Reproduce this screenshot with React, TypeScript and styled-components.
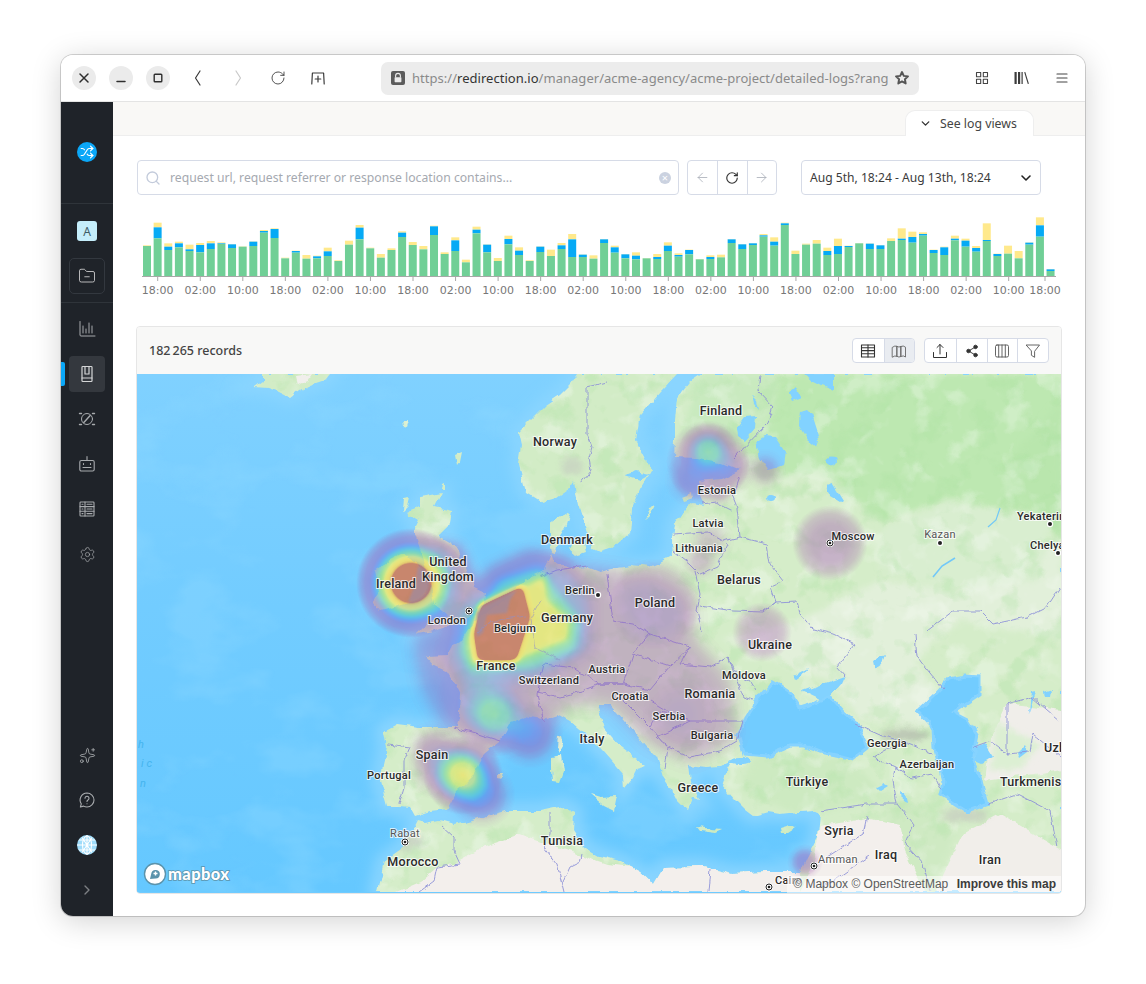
import React from 'react';
import styled, { createGlobalStyle } from 'styled-components';
import {
  ArrowLeft,
  ArrowRight,
  ChevronDown,
  ChevronRight,
  FolderMinus,
  RotateCw,
  Search,
  Settings,
  Share2,
  Shuffle,
  Sparkles,
} from 'lucide-react';

const GlobalStyle = createGlobalStyle`
  html, body {
    margin: 0;
    padding: 0;
    background: #fff;
    font-family: "Noto Sans", "Liberation Sans", sans-serif;
  }
`;

const Page = styled.div`
  width: 1146px;
  height: 984px;
  padding: 55px 0 0 61px;
  box-sizing: border-box;
  overflow: hidden;
`;

const Window = styled.div`
  width: 1024px;
  height: 861px;
  border-radius: 12px;
  overflow: hidden;
  display: flex;
  flex-direction: column;
  background: #fff;
  box-shadow: 0 0 0 1px rgba(0, 0, 0, 0.16), 0 5px 30px rgba(0, 0, 0, 0.18);
`;

const TitleBar = styled.div`
  height: 46px;
  flex: none;
  display: flex;
  align-items: center;
  padding-left: 11px;
  background: #fff;
  border-bottom: 1px solid #e4e4e4;
  color: #333;
`;

const WinButton = styled.button`
  width: 24px;
  height: 24px;
  padding: 0;
  margin-right: 13px;
  border: 0;
  border-radius: 50%;
  background: #ebebeb;
  display: flex;
  align-items: center;
  justify-content: center;
  color: #2e2e2e;
`;

const NavIcon = styled.div<{ $faded?: boolean }>`
  width: 40px;
  height: 24px;
  display: flex;
  align-items: center;
  justify-content: center;
  color: ${({ $faded }) => ($faded ? '#c9c9c9' : '#3a3a3a')};
`;

const NavGroup = styled.div`
  display: flex;
  margin-left: -5px;
`;

const UrlBar = styled.div`
  width: 538px;
  height: 33px;
  margin-left: 43px;
  border-radius: 7px;
  background: #ececec;
  display: flex;
  align-items: center;
  padding: 0 9px 0 10px;
  box-sizing: border-box;
  color: #3d3d3d;
`;

const UrlText = styled.div`
  flex: 1;
  min-width: 0;
  margin: 0 6px 0 7px;
  overflow: hidden;
  white-space: nowrap;
  font-size: 13px;
  letter-spacing: 0.03px;
  color: #8a8a8a;

  b {
    font-weight: 400;
    color: #333;
  }
`;

const ToolIcons = styled.div`
  display: flex;
  margin-left: 53px;
  gap: 20px;
  color: #444;
`;

const ToolIcon = styled.div`
  width: 20px;
  height: 20px;
  display: flex;
  align-items: center;
  justify-content: center;
`;

const Body = styled.div`
  flex: 1;
  min-height: 0;
  display: flex;
`;

const Sidebar = styled.nav`
  width: 52px;
  flex: none;
  background: #1f2329;
  display: flex;
  flex-direction: column;
  color: #a8abae;
`;

const LogoBlock = styled.div`
  height: 102px;
  flex: none;
  box-sizing: border-box;
  padding-top: 40px;
  display: flex;
  justify-content: center;
  border-bottom: 1px solid #2f343a;
`;

const LogoDot = styled.div`
  width: 20px;
  height: 20px;
  border-radius: 50%;
  background: #0ba7f7;
  color: #fff;
  display: flex;
  align-items: center;
  justify-content: center;
`;

const OrgBlock = styled.div`
  height: 99px;
  flex: none;
  box-sizing: border-box;
  padding-top: 17px;
  display: flex;
  flex-direction: column;
  align-items: center;
  gap: 17px;
  border-bottom: 1px solid #2f343a;
`;

const OrgBadge = styled.div`
  width: 20px;
  height: 20px;
  border-radius: 3px;
  background: #c5eefb;
  color: #3f5d66;
  font-size: 12px;
  display: flex;
  align-items: center;
  justify-content: center;
`;

const FolderButton = styled.div`
  width: 36px;
  height: 36px;
  border: 1px solid #33383f;
  border-radius: 5px;
  box-sizing: border-box;
  display: flex;
  align-items: center;
  justify-content: center;
  color: #c9cacb;
`;

const SideList = styled.div<{ $bottom?: boolean }>`
  display: flex;
  flex-direction: column;
  align-items: center;
  gap: 9px;
  padding-top: ${({ $bottom }) => ($bottom ? '0' : '8px')};
  padding-bottom: ${({ $bottom }) => ($bottom ? '8px' : '0')};
  margin-top: ${({ $bottom }) => ($bottom ? 'auto' : '0')};
`;

const SideItem = styled.div<{ $active?: boolean }>`
  position: relative;
  width: 36px;
  height: 36px;
  border-radius: 4px;
  display: flex;
  align-items: center;
  justify-content: center;
  background: ${({ $active }) => ($active ? '#34383e' : 'transparent')};
  color: ${({ $active }) => ($active ? '#d5d6d7' : 'inherit')};

  ${({ $active }) =>
    $active
      ? `&::before {
    content: '';
    position: absolute;
    left: -8px;
    top: 6px;
    width: 4px;
    height: 24px;
    border-radius: 0 2px 2px 0;
    background: #0ba7f7;
  }`
      : ''}
`;

const Avatar = styled.div`
  width: 20px;
  height: 20px;
  border-radius: 50%;
  overflow: hidden;
  display: flex;
`;

const Main = styled.main`
  flex: 1;
  min-width: 0;
  display: flex;
  flex-direction: column;
`;

const TabStrip = styled.div`
  height: 33px;
  flex: none;
  background: #f9f8f6;
  border-bottom: 1px solid #eeeeee;
  display: flex;
  justify-content: flex-end;
  align-items: flex-end;
  padding-right: 51px;
`;

const ViewsTab = styled.div`
  width: 129px;
  height: 26px;
  margin-bottom: -1px;
  box-sizing: border-box;
  background: #fff;
  border: 1px solid #eeeeee;
  border-bottom: 0;
  border-radius: 10px 10px 0 0;
  display: flex;
  align-items: center;
  padding-left: 13px;
  gap: 8px;
  font-size: 12.3px;
  color: #444;
`;

const Content = styled.div`
  flex: 1;
  min-height: 0;
  padding: 24px 23px 0 24px;
  display: flex;
  flex-direction: column;
`;

const FilterRow = styled.div`
  display: flex;
  align-items: stretch;
  height: 35px;
`;

const SearchBox = styled.div`
  width: 542px;
  box-sizing: border-box;
  border: 1px solid #d6dbe7;
  border-radius: 4px;
  display: flex;
  align-items: center;
  padding: 0 7px;
  color: #c3cbdb;
`;

const SearchText = styled.div`
  flex: 1;
  margin-left: 9px;
  font-size: 12.2px;
  color: #a5a9b0;
`;

const ClearDot = styled.div`
  width: 12px;
  height: 12px;
  border-radius: 50%;
  background: #cbd2e0;
  color: #fff;
  font-size: 11px;
  line-height: 12px;
  text-align: center;
`;

const Group = styled.div<{ $gap?: number }>`
  display: flex;
  margin-left: ${({ $gap }) => $gap ?? 8}px;
  border: 1px solid #d6dbe7;
  border-radius: 4px;
  overflow: hidden;
  background: #fff;
`;

const GroupButton = styled.div<{ $dim?: boolean; $on?: boolean; $w?: number }>`
  width: ${({ $w }) => $w ?? 29.33}px;
  box-sizing: border-box;
  display: flex;
  align-items: center;
  justify-content: center;
  color: ${({ $dim }) => ($dim ? '#a9aeb8' : '#333')};
  background: ${({ $on }) => ($on ? '#e9ecf1' : 'transparent')};

  & + & {
    border-left: 1px solid #d6dbe7;
  }
`;

const DateSelect = styled.div`
  width: 240px;
  margin-left: 24px;
  box-sizing: border-box;
  border: 1px solid #d6dbe7;
  border-radius: 4px;
  display: flex;
  align-items: center;
  justify-content: space-between;
  padding: 0 6px 0 8px;
  font-size: 12.1px;
  color: #3b3b3b;
`;

const ChartWrap = styled.div`
  margin: 20px 0;
  height: 91px;
  flex: none;

  svg {
    display: block;
  }
`;

const Panel = styled.section`
  width: 926px;
  height: 568px;
  margin-left: -1px;
  box-sizing: border-box;
  border: 1px solid #e6e6e6;
  border-radius: 4px;
  display: flex;
  flex-direction: column;
  overflow: hidden;
`;

const PanelHead = styled.div`
  height: 47px;
  flex: none;
  background: #f8f8f7;
  display: flex;
  align-items: center;
  padding: 0 12px 0 12px;
`;

const Records = styled.div`
  flex: 1;
  font-size: 12.5px;
  font-weight: 500;
  color: #444;
`;

const HeadGroup = styled(Group)`
  height: 25px;
  box-sizing: border-box;
`;

const MapFrame = styled.div`
  position: relative;
  flex: 1;
  min-height: 0;
  overflow: hidden;
  background: #6fcbff;

  svg {
    display: block;
  }
`;

const Attribution = styled.div`
  position: absolute;
  right: 0;
  bottom: 0;
  padding: 0 5px 1px 6px;
  height: 17px;
  box-sizing: border-box;
  background: rgba(255, 255, 255, 0.55);
  font-family: "Liberation Sans", Arial, sans-serif;
  font-size: 12px;
  line-height: 16px;
  white-space: nowrap;
  color: #5c5c5c;

  b {
    margin-left: 5px;
    color: #3c3c3c;
  }
`;

const MapLogo = styled.div`
  position: absolute;
  left: 6px;
  bottom: 7px;
  display: flex;
  align-items: center;
  gap: 1px;
`;

const MapLogoText = styled.span`
  font-family: "Lato", "Liberation Sans", sans-serif;
  font-size: 16.5px;
  font-weight: 900;
  letter-spacing: 0.4px;
  color: #fff;
  -webkit-text-stroke: 1.6px #5b93ab;
  paint-order: stroke fill;
`;

const Place = styled.text<{ $size?: number; $muted?: boolean }>`
  font-family: Roboto, "Noto Sans", sans-serif;
  font-size: ${({ $size }) => $size ?? 12.5}px;
  font-weight: ${({ $muted }) => ($muted ? 400 : 500)};
  letter-spacing: 0.25px;
  fill: ${({ $muted }) => ($muted ? '#555' : '#2a2a2a')};
  stroke: rgba(255, 255, 255, 0.75);
  stroke-width: 2px;
  paint-order: stroke fill;
`;

const OceanText = styled.text`
  font-family: Roboto, sans-serif;
  font-size: 11px;
  font-style: italic;
  fill: #45b4ee;
`;

const TickLabel = styled.text`
  font-family: "DejaVu Sans", sans-serif;
  font-size: 11px;
  fill: #777;
`;

// bar tops read off the picture: [green, blue, yellow], measured in 3x crop px, 198 = baseline
const bars: number[][] = [
  [108, 108, 106], [85, 52, 38], [120, 110, 100], [112, 100, 95], [123, 118, 104], [127, 105, 99],
  [117, 100, 93], [102, 100, 97], [114, 103, 102], [110, 110, 109], [108, 95, 94], [68, 63, 60],
  [84, 57, 55], [145, 145, 143], [128, 123, 122], [146, 146, 135], [145, 139, 137], [138, 124, 113],
  [153, 153, 151], [104, 104, 92], [88, 53, 45], [115, 115, 113], [143, 143, 132], [120, 120, 115],
  [81, 68, 64], [105, 105, 96], [118, 118, 108], [75, 49, 47], [132, 132, 127], [123, 91, 82],
  [157, 157, 149], [70, 59, 50], [127, 104, 103], [153, 153, 144], [103, 87, 77], [135, 122, 112],
  [153, 153, 151], [126, 110, 109], [138, 138, 119], [117, 106, 99], [141, 88, 72], [141, 134, 133],
  [146, 146, 136], [99, 88, 87], [128, 112, 107], [145, 133, 132], [148, 137, 127], [145, 145, 144],
  [147, 141, 132], [123, 107, 97], [140, 135, 130], [133, 120, 119], [148, 148, 147], [147, 141, 136],
  [142, 142, 134], [99, 88, 87], [117, 103, 102], [105, 100, 99], [80, 76, 72], [107, 95, 82],
  [45, 40, 38], [132, 132, 122], [104, 104, 101], [101, 101, 90], [135, 123, 113], [132, 108, 86],
  [111, 108, 107], [100, 100, 99], [117, 101, 100], [117, 106, 105], [93, 93, 85], [90, 86, 55],
  [98, 81, 65], [77, 72, 67], [129, 120, 119], [135, 112, 110], [91, 86, 77], [110, 92, 86],
  [125, 114, 108], [93, 90, 40], [138, 132, 131], [131, 131, 107], [145, 145, 123], [104, 98, 97],
  [80, 46, 22], [183, 178, 177],
];

const ticks = ['18:00', '02:00', '10:00', '18:00', '02:00', '10:00', '18:00', '02:00', '10:00', '18:00', '02:00', '10:00', '18:00', '02:00', '10:00', '18:00', '02:00', '10:00', '18:00', '02:00', '10:00', '18:00'];

const Chart = () => (
  <svg width="925" height="91" viewBox="137 215 925 91">
    {bars.map(([g, b, y], i) => {
      const x = 143 + i * 10.63;
      const top = (v: number) => 210 + v / 3;
      return (
        <g key={i}>
          <rect x={x} y={top(y)} width="8" height={(b - y) / 3} fill="#ffe98c" />
          <rect x={x} y={top(b)} width="8" height={(g - b) / 3} fill="#06aaf5" />
          <rect x={x} y={top(g)} width="8" height={276 - top(g)} fill="#70cf96" />
        </g>
      );
    })}
    <line x1="142" x2="1056" y1="276.5" y2="276.5" stroke="#a8a8a8" />
    {ticks.map((t, i) => {
      const x = i === ticks.length - 1 ? 1045 : 157.7 + i * 42.55;
      return (
        <g key={i}>
          <line x1={x} x2={x} y1="276" y2="281" stroke="#a8a8a8" />
          <TickLabel x={x} y="294" textAnchor="middle">{t}</TickLabel>
        </g>
      );
    })}
  </svg>
);

const landPath =
  'M702 374 L690 382 L683 391 L677 400 L675 420 L675 441 L674 457 L697 458 L720 462 L740 470 L722 479 L697 481 L700 495 L704 505 L693 503 L684 510 L674 525 L672 540 L673 556 L660 563 L650 567 L630 565 L612 568 L600 571 L587 566 L570 568 L556 564 L552 554 L545 570 L527 578 L516 588 L504 600 L488 612 L472 624 L462 640 L452 644 L448 656 L427 657 L434 665 L447 671 L455 684 L460 694 L459 712 L456 727 L420 727 L397 724 L384 731 L387 747 L383 765 L380 781 L387 806 L400 806 L410 807 L415 816 L430 811 L447 809 L457 791 L474 774 L484 754 L500 741 L510 722 L525 716 L542 719 L557 714 L570 721 L585 734 L597 744 L611 760 L623 774 L624 788 L632 778 L636 770 L647 767 L632 755 L618 744 L604 728 L597 704 L610 704 L630 727 L645 745 L657 757 L663 777 L672 790 L677 800 L688 811 L692 797 L700 800 L690 782 L688 766 L705 768 L720 767 L733 760 L727 770 L722 785 L735 800 L745 810 L753 816 L768 812 L780 814 L798 812 L813 811 L820 814 L818 837 L807 857 L800 872 L767 872 L733 874 L700 866 L663 867 L653 884 L640 872 L620 861 L600 856 L584 847 L574 831 L575 812 L564 806 L540 811 L505 811 L480 818 L455 824 L440 820 L425 823 L417 821 L404 847 L384 861 L377 892 L1062 892 L1062 374 Z';

const isles = [
  'M254 387 L262 381 L262 374 L330 374 L325 380 L310 385 L298 391 L290 397 L280 392 L268 388 Z',
  'M420 497 L441 493 L434 507 L452 511 L449 527 L439 537 L455 546 L465 567 L474 587 L485 592 L484 604 L470 614 L457 624 L434 631 L417 634 L430 621 L447 614 L434 604 L430 580 L424 561 L417 541 L414 531 L419 521 L407 512 L420 507 Z',
  'M404 554 L414 561 L424 571 L427 587 L417 601 L394 607 L380 611 L372 602 L380 591 L375 571 L390 561 Z',
  'M577 374 L600 374 L677 374 L660 392 L640 415 L636 440 L652 470 L640 490 L632 510 L630 533 L612 548 L600 552 L592 548 L585 525 L578 505 L574 482 L570 488 L556 498 L542 502 L526 492 L519 465 L522 445 L519 431 L532 418 L545 405 L560 395 L570 385 Z',
  'M570 511 L566 525 L558 538 L556 552 L552 554 L550 540 L550 524 L560 518 Z',
  'M572 542 L584 544 L586 552 L575 556 L568 550 Z',
  'M404 497 L410 496 L408 505 L403 510 Z',
  'M455 455 L462 452 L460 462 L457 466 Z',
  'M402 421 L409 420 L407 427 L403 426 Z',
  'M442 484 L444 483 L444 490 L441 490 Z',
  'M557 737 L561 736 L563 745 L559 752 L556 746 Z',
  'M551 757 L562 755 L564 772 L560 783 L552 782 L551 770 Z',
  'M497 774 L503 774 L501 778 L497 777 Z',
  'M590 794 L600 797 L617 796 L614 811 L604 806 Z',
  'M697 826 L710 828 L722 829 L715 832 L700 830 Z',
  'M780 829 L790 826 L797 828 L788 834 L781 834 Z',
  'M646 519 L650 507 L655 505 L650 515 Z',
  'M682 497 L692 493 L693 499 L684 502 Z',
];

const waters = [
  'M757 441 L765 436 L775 437 L785 452 L783 465 L775 468 L768 470 L760 458 Z',
  'M800 411 L806 409 L812 415 L820 440 L818 448 L808 440 L799 425 Z',
  'M805 374 L833 374 L833 389 L822 385 L812 380 Z',
  'M827 486 L833 484 L843 500 L840 502 L830 496 Z',
  'M625 475 L637 471 L650 474 L640 480 Z',
  'M737 428 L745 417 L757 416 L756 428 L745 441 L738 436 Z',
  'M752 395 L757 400 L759 409 L754 403 Z',
  'M789 395 L797 388 L802 398 L792 402 Z',
  'M826 462 A5 4 0 1 1 837 462 A5 4 0 1 1 826 462 Z',
  'M767 498 A4 3 0 1 1 775 498 A4 3 0 1 1 767 498 Z',
  'M803 691 L845 676 L842 683 L830 697 L820 699 Z',
  'M973 747 L984 743 L993 757 L982 763 L975 760 Z',
  'M729 761 A11 4 0 1 1 751 761 A11 4 0 1 1 729 761 Z',
  'M877 788 L885 784 L888 786 L880 791 Z',
  'M902 790 L906 792 L908 804 L903 802 Z',
  'M1017 752 L1024 745 L1027 752 L1019 758 Z',
  'M1030 692 L1034 691 L1031 703 L1028 712 Z',
  'M1043 692 L1052 689 L1051 695 L1044 697 Z',
  'M873 661 L885 654 L882 665 L875 670 Z',
  'M793 676 L808 668 L802 676 L795 681 Z',
];

const innerSeas = [
  'M737 734 L745 720 L757 701 L773 682 L780 686 L792 694 L792 697 L800 709 L810 706 L820 700 L830 697 L845 714 L857 724 L868 747 L853 759 L835 755 L820 752 L805 746 L790 746 L767 756 L743 754 Z',
  'M980 677 L965 676 L950 679 L935 695 L918 711 L933 727 L934 750 L943 781 L940 794 L967 811 L987 804 L983 790 L980 777 L973 757 L977 734 L968 720 L953 712 L968 702 L980 694 Z',
];

const borders = [
  '607,382 587,387 587,434 592,447 589,457 591,470 580,484',
  '760,374 758,391 773,407 767,424 733,459',
  '740,477 733,497 737,507 740,537 767,544 770,564 783,581 770,587 775,602 763,611',
  '703,504 715,502 733,511',
  '673,534 707,532 723,541 740,537',
  '727,544 717,567 700,574 690,564 673,551',
  '695,571 700,594 697,611 702,631',
  '700,606 733,611 763,612 775,602 797,601 800,614 813,629 833,634 855,644 837,667 845,676',
  '607,574 613,621 633,624 650,634 690,647',
  '544,664 537,694 544,721',
  '540,577 557,570 587,566',
  '454,727 475,733 500,741',
  '387,744 410,747 404,761 404,787 399,804',
  '544,664 573,668 600,684 623,684 633,654 650,634',
  '537,692 560,697 585,690 600,684',
  '633,654 670,666 690,647 680,664 710,667 728,657 743,697 753,700',
  '728,657 737,675 750,682 755,690',
  '600,684 623,684 650,690 670,666',
  '657,737 690,721 743,721 737,741 720,751 690,757 668,747 657,737',
  '623,700 650,727 668,747 665,770',
  '650,700 675,715 690,721',
  '650,727 660,712 680,716',
  '855,724 880,735 905,742 933,754',
  '873,757 895,767 893,781 897,804 867,804 820,811',
  '873,757 885,750 905,742',
  '895,767 912,778 932,774 942,790',
  '867,816 863,834 827,857',
  '897,804 913,824 905,844 923,864 930,891',
  '915,634 917,657 943,689',
  '927,631 953,611 980,611 993,624 1027,617 1047,607 1060,587',
  '973,747 990,741 1007,754 1007,704 1032,697 1060,721',
  '1007,754 1030,752 1033,734 1060,757',
  '988,804 1017,794 1050,811 1057,847',
  '442,826 454,837 454,851 460,864 437,867 434,881 419,892',
  '550,811 550,834 544,847 557,864 564,892',
  '582,854 580,862 570,867 562,884',
  '710,869 708,892',
  '821,888 840,876 870,855',
];

// x, y, radius, strength
const heat: [number, number, number, number][] = [
  [411, 583, 55, 1],
  [411, 583, 34, 0.45],
  [495, 715, 42, 0.3],
  [475, 700, 40, 0.1],
  [530, 735, 34, 0.18],
  [463, 775, 40, 0.58],
  [482, 795, 34, 0.18],
  [440, 765, 36, 0.12],
  [432, 748, 28, 0.08],
  [680, 715, 40, 0.05],
  [708, 452, 30, 0.32],
  [692, 480, 28, 0.1],
  [730, 468, 28, 0.1],
  [765, 470, 22, 0.08],
  [720, 492, 18, 0.06],
  [710, 540, 26, 0.05],
  [700, 562, 22, 0.06],
  [805, 862, 18, 0.16],
];

// flat low-intensity patches, these only ever reach the mauve part of the ramp
const discs: [number, number, number, number][] = [
  [830, 543, 38, 0.1],
  [762, 632, 30, 0.08],
  [655, 604, 46, 0.07],
  [708, 462, 42, 0.09],
];

// contour bands around the hot zone over Belgium and northern France
const heatBands: [string, number, number][] = [
  ['M415 640 L470 600 L540 565 L600 570 L650 578 L690 600 L692 640 L728 680 L735 738 L690 760 L650 742 L610 702 L570 702 L540 732 L500 745 L470 732 L448 730 L425 690 Z', 0.09, 9],
  ['M432 542 L460 545 L480 590 L470 622 L432 622 Z', 0.1, 6],
  ['M455 620 L490 570 L530 552 L565 560 L590 600 L590 650 L540 680 L470 690 L445 660 Z', 0.15, 7],
  ['M468 625 L500 580 L540 568 L555 590 L580 620 L575 650 L530 668 L470 672 L460 650 Z', 0.22, 5],
  ['M530 583 L545 575 L548 600 L570 620 L568 640 L530 655 L500 668 L472 663 L467 640 L480 605 Z', 0.3, 3],
  ['M522 586 L530 617 L516 660 L478 660 L474 633 L481 605 Z', 1, 3],
];

const labels: [string, number, number, number?, boolean?][] = [
  ['Finland', 721, 415],
  ['Norway', 555, 446],
  ['Estonia', 717, 494, 11],
  ['Latvia', 708, 527, 11],
  ['Lithuania', 699, 552, 11],
  ['Denmark', 567, 544],
  ['Belarus', 739, 584],
  ['Poland', 655, 607],
  ['Germany', 567, 622],
  ['Berlin', 580, 594, 11],
  ['United', 448, 566],
  ['Kingdom', 448, 581],
  ['Ireland', 396, 588],
  ['London', 447, 624, 11],
  ['Belgium', 515, 632, 11],
  ['France', 496, 670],
  ['Moscow', 853, 540, 11],
  ['Kazan', 940, 538, 11, true],
  ['Ukraine', 770, 649],
  ['Moldova', 744, 679, 11],
  ['Austria', 607, 673, 11],
  ['Switzerland', 549, 684, 11],
  ['Croatia', 630, 700, 11],
  ['Romania', 710, 698],
  ['Serbia', 669, 720, 11],
  ['Bulgaria', 712, 739, 11],
  ['Italy', 592, 743],
  ['Spain', 432, 759],
  ['Portugal', 389, 779, 11],
  ['Greece', 698, 792],
  ['Türkiye', 807, 786],
  ['Georgia', 887, 747, 11],
  ['Azerbaijan', 927, 768, 11],
  ['Syria', 839, 835],
  ['Iraq', 886, 859],
  ['Iran', 990, 864],
  ['Amman', 838, 863, 11, true],
  ['Tunisia', 562, 845],
  ['Morocco', 413, 866],
  ['Rabat', 405, 837, 11, true],
];

const edgeLabels: [string, number, number, number?][] = [
  ['Yekaterinburg', 1017, 520, 11],
  ['Chelyabinsk', 1030, 549, 11],
  ['Turkmenistan', 1000, 786],
  ['Uzbekistan', 1044, 752],
  ['Cairo', 775, 884, 11],
];

const dots: [number, number][] = [[598, 595], [940, 543], [1050, 524], [1058, 553]];
const ringDots: [number, number][] = [[469, 611], [830, 543], [405, 842], [814, 866], [769, 887]];

const heatStops = [
  [160, 85, 170, 0], [160, 85, 172, 0.26], [160, 85, 178, 0.42], [145, 90, 190, 0.48], [120, 105, 215, 0.5],
  [90, 125, 225, 0.5], [70, 160, 215, 0.5], [70, 190, 190, 0.5], [90, 205, 150, 0.5], [120, 215, 120, 0.5],
  [170, 225, 100, 0.55], [225, 230, 90, 0.58], [245, 225, 80, 0.62], [248, 218, 75, 0.62], [245, 210, 70, 0.62],
  [238, 180, 65, 0.65], [195, 90, 70, 0.7], [195, 90, 70, 0.7], [195, 90, 70, 0.7], [195, 90, 70, 0.7], [195, 90, 70, 0.7],
];

const channel = (i: number) => heatStops.map((s) => (i === 3 ? s[i] : s[i] / 255).toFixed(3)).join(' ');

const mapBox = { filterUnits: 'userSpaceOnUse', x: 137, y: 374, width: 925, height: 518 } as const;

const EuropeMap = () => (
  <svg width="924" height="518" viewBox="137 374 924 518">
    <defs>
      <linearGradient id="sea" x1="0" y1="0" x2="0" y2="1">
        <stop offset="0" stopColor="#80d1ff" />
        <stop offset="0.45" stopColor="#72ccff" />
        <stop offset="1" stopColor="#65c8ff" />
      </linearGradient>
      <radialGradient id="blob">
        <stop offset="0" stopColor="#fff" stopOpacity="1" />
        <stop offset="0.3" stopColor="#fff" stopOpacity="0.85" />
        <stop offset="0.5" stopColor="#fff" stopOpacity="0.5" />
        <stop offset="0.75" stopColor="#fff" stopOpacity="0.15" />
        <stop offset="1" stopColor="#fff" stopOpacity="0" />
      </radialGradient>
      <radialGradient id="disc">
        <stop offset="0" stopColor="#fff" stopOpacity="1" />
        <stop offset="0.5" stopColor="#fff" stopOpacity="0.9" />
        <stop offset="0.75" stopColor="#fff" stopOpacity="0.55" />
        <stop offset="1" stopColor="#fff" stopOpacity="0" />
      </radialGradient>
      <filter id="shelf" {...mapBox}>
        <feGaussianBlur stdDeviation="7" />
      </filter>
      {[1, 3, 5, 6, 7, 9].map((b) => (
        <filter key={b} id={`blur${b}`} {...mapBox}>
          <feGaussianBlur stdDeviation={b} />
        </filter>
      ))}
      <filter id="rough" {...mapBox} colorInterpolationFilters="sRGB">
        <feTurbulence type="fractalNoise" baseFrequency="0.08" numOctaves="3" seed="4" result="n" />
        <feDisplacementMap in="SourceGraphic" in2="n" scale="7" xChannelSelector="R" yChannelSelector="G" />
      </filter>
      <filter id="wiggle" {...mapBox} colorInterpolationFilters="sRGB">
        <feTurbulence type="fractalNoise" baseFrequency="0.14" numOctaves="2" seed="9" result="n" />
        <feDisplacementMap in="SourceGraphic" in2="n" scale="5" xChannelSelector="R" yChannelSelector="G" />
      </filter>
      <filter id="mottleLight" {...mapBox} colorInterpolationFilters="sRGB">
        <feTurbulence type="fractalNoise" baseFrequency="0.035" numOctaves="3" seed="8" />
        <feColorMatrix type="matrix" values="0 0 0 0 1  0 0 0 0 1  0 0 0 0 1  5 0 0 0 -2.6" />
      </filter>
      <filter id="mottleGreen" {...mapBox} colorInterpolationFilters="sRGB">
        <feTurbulence type="fractalNoise" baseFrequency="0.04" numOctaves="3" seed="21" />
        <feColorMatrix type="matrix" values="0 0 0 0 0.66  0 0 0 0 0.88  0 0 0 0 0.62  5 0 0 0 -2.7" />
      </filter>
      <filter id="mottleSea" {...mapBox} colorInterpolationFilters="sRGB">
        <feTurbulence type="fractalNoise" baseFrequency="0.012 0.02" numOctaves="4" seed="14" />
        <feColorMatrix type="matrix" values="0 0 0 0 0.56  0 0 0 0 0.85  0 0 0 0 1  4 0 0 0 -2" />
      </filter>
      <filter id="heat" {...mapBox} colorInterpolationFilters="sRGB">
        <feColorMatrix type="matrix" values="0 0 0 1 0  0 0 0 1 0  0 0 0 1 0  0 0 0 1 0" />
        <feComponentTransfer>
          <feFuncR type="table" tableValues={channel(0)} />
          <feFuncG type="table" tableValues={channel(1)} />
          <feFuncB type="table" tableValues={channel(2)} />
          <feFuncA type="table" tableValues={channel(3)} />
        </feComponentTransfer>
      </filter>
      <clipPath id="land">
        <path d={landPath} />
        <path d={isles.join(' ')} />
      </clipPath>
    </defs>

    <rect x="137" y="374" width="925" height="518" fill="url(#sea)" />
    <rect x="137" y="374" width="925" height="518" filter="url(#mottleSea)" opacity="0.35" />
    <g filter="url(#shelf)" fill="none" stroke="#8ad5ff" strokeWidth="16">
      <path d={landPath} />
      <path d={isles.slice(0, 4).join(' ')} />
    </g>

    <g filter="url(#rough)">
      <path d={landPath} fill="#d5edc9" />
      <path d={isles.join(' ')} fill="#d2ecc6" />
      <g clipPath="url(#land)">
        <path d="M780 374 L1062 374 L1062 520 L950 500 L880 520 L820 470 L760 480 L740 450 Z" fill="#bde8b1" filter="url(#blur3)" />
        <path d="M700 374 L780 374 L770 430 L720 450 L680 440 Z" fill="#c9eabf" filter="url(#blur3)" />
        <path d="M1062 400 L1000 470 L1062 540 Z" fill="#b9e6ad" filter="url(#blur3)" />
        <path d="M800 620 L880 580 L960 590 L1062 540 L1062 640 L960 620 L915 660 L960 730 L860 720 L830 680 L720 640 Z" fill="#e2f0da" filter="url(#blur3)" />
        <path d="M950 500 L1050 520 L1040 580 L950 590 L880 570 L880 530 Z" fill="#d9eed0" filter="url(#blur3)" />
        <path d="M760 740 L850 760 L890 800 L800 815 L740 790 Z" fill="#cdeac1" filter="url(#blur3)" />
        <path d="M880 790 L960 830 L930 890 L900 870 Z" fill="#cfeac3" filter="url(#blur3)" />
        <rect x="137" y="374" width="925" height="518" filter="url(#mottleLight)" opacity="0.28" />
        <rect x="137" y="374" width="925" height="518" filter="url(#mottleGreen)" opacity="0.3" />
        <path d="M397 892 L420 882 L437 867 L457 862 L484 847 L520 834 L540 841 L577 854 L607 864 L640 868 L700 860 L800 868 L800 892 Z" fill="#f3efec" />
        <path d="M867 817 L820 827 L813 867 L800 892 L925 892 L905 850 L900 825 Z" fill="#f3efec" />
        <path d="M963 834 L1000 814 L1062 850 L1062 892 L935 892 Z" fill="#f1eeea" />
        <path d="M1007 704 L1062 711 L1062 770 L985 781 L990 740 Z" fill="#f0eeea" />
        <path d="M995 720 L1040 745 L1020 770 L990 770 Z" fill="#dcefd3" filter="url(#blur3)" />
        <ellipse cx="572" cy="466" rx="11" ry="9" fill="#c4cabf" opacity="0.6" filter="url(#blur3)" />
        <ellipse cx="400" cy="842" rx="24" ry="8" fill="#bfc5bc" opacity="0.6" filter="url(#blur3)" />
        <ellipse cx="905" cy="735" rx="24" ry="7" fill="#b4b9ae" opacity="0.7" filter="url(#blur3)" />
        <ellipse cx="965" cy="815" rx="24" ry="6" fill="#c4c9be" opacity="0.7" filter="url(#blur3)" />
      </g>
      <path d="M296 376 L312 374 L308 380 L298 384 Z" fill="#f1efec" />
      <path d={waters.join(' ')} fill="#82d2ff" />
      <path d={innerSeas.join(' ')} fill="#72ccff" stroke="#86d3ff" strokeWidth="3" />
    </g>
    <path d="M933 577 L942 566 L955 558" fill="none" stroke="#72c8f8" strokeWidth="1.6" />
    <path d="M988 527 L996 520 L1000 508" fill="none" stroke="#72c8f8" strokeWidth="1.2" />
    <g fill="none" stroke="#8f93d8" strokeWidth="0.9" strokeLinejoin="round" filter="url(#wiggle)">
      {borders.map((p) => (
        <polyline key={p} points={p} />
      ))}
    </g>

    <g filter="url(#heat)">
      {heat.map(([cx, cy, r, a]) => (
        <circle key={`${cx}-${cy}-${r}`} cx={cx} cy={cy} r={r} fill="url(#blob)" fillOpacity={a} />
      ))}
      {discs.map(([cx, cy, r, a]) => (
        <circle key={`${cx}-${cy}-${r}`} cx={cx} cy={cy} r={r} fill="url(#disc)" fillOpacity={a} />
      ))}
      {heatBands.map(([d, a, b]) => (
        <path key={d} d={d} fill="#fff" fillOpacity={a} filter={`url(#blur${b})`} />
      ))}
    </g>
    <g fill="#a58a98" opacity="0.85" filter="url(#blur1)">
      <path d="M418 566 A19 19 0 0 1 408 602 L415 585 Z" />
      <path d="M477 613 L483 607 L517 590 L510 600 L507 613 L487 615 L483 633 L477 637 Z" />
    </g>
    <g fill="none" stroke="#8f8fc8" strokeWidth="0.7" opacity="0.8" filter="url(#wiggle)">
      <polyline points="477,633 490,622 510,618 527,616" />
      <polyline points="540,600 530,620 535,648 560,660" />
    </g>

    {ringDots.map(([x, y]) => (
      <g key={`${x}-${y}`}>
        <circle cx={x} cy={y} r="4" fill="#fff" />
        <circle cx={x} cy={y} r="3" fill="none" stroke="#222" strokeWidth="1" />
        <circle cx={x} cy={y} r="1.3" fill="#222" />
      </g>
    ))}
    {dots.map(([x, y]) => (
      <g key={`${x}-${y}`}>
        <circle cx={x} cy={y} r="3.2" fill="#fff" />
        <circle cx={x} cy={y} r="2" fill="#222" />
      </g>
    ))}
    {labels.map(([t, x, y, s, m]) => (
      <Place key={t} x={x} y={y} $size={s} $muted={m} textAnchor="middle">
        {t}
      </Place>
    ))}
    {edgeLabels.map(([t, x, y, s]) => (
      <Place key={t} x={x} y={y} $size={s}>
        {t}
      </Place>
    ))}
    <OceanText x="138" y="748">h</OceanText>
    <OceanText x="141" y="767" letterSpacing="3">ic</OceanText>
    <OceanText x="140" y="787">n</OceanText>
  </svg>
);

const Icon = styled.svg`
  fill: none;
  stroke: currentColor;
  stroke-linecap: round;
  stroke-linejoin: round;
`;

const TitleGlyphs = {
  close: <Icon width="12" height="12" viewBox="0 0 12 12" strokeWidth="1.5"><path d="M2 2l8 8M10 2l-8 8" /></Icon>,
  min: <Icon width="12" height="12" viewBox="0 0 12 12" strokeWidth="1.5"><path d="M2 9.5h8" /></Icon>,
  max: <Icon width="12" height="12" viewBox="0 0 12 12" strokeWidth="1.4"><rect x="2.2" y="2.2" width="7.6" height="7.6" rx="0.8" /></Icon>,
  back: <Icon width="16" height="18" viewBox="0 0 16 18" strokeWidth="1.2"><path d="M10 2L5.5 9l4.5 7" /></Icon>,
  next: <Icon width="16" height="18" viewBox="0 0 16 18" strokeWidth="1.2"><path d="M6 2l4.5 7L6 16" /></Icon>,
  newTab: <Icon width="16" height="16" viewBox="0 0 16 16" strokeWidth="1.2"><path d="M1.8 14L2.4 3h11.2l.6 11M8 6v6M5.2 9h5.6" /></Icon>,
};

const LockIcon = () => (
  <svg width="14" height="14" viewBox="0 0 14 14">
    <rect x="0" y="0" width="14" height="14" rx="2" fill="#5c5c5c" />
    <path d="M4.6 6.4V4.8a2.4 2.4 0 0 1 4.8 0v1.6" fill="none" stroke="#ececec" strokeWidth="1.1" />
    <rect x="3.6" y="6.2" width="6.8" height="5" rx="0.6" fill="#ececec" />
  </svg>
);

const StarIcon = () => (
  <Icon width="16" height="16" viewBox="0 0 16 16" strokeWidth="1.9" style={{ color: '#555', flex: 'none' }}>
    <path d="M8 2l1.8 3.9 4.2.5-3.1 2.9.8 4.2L8 11.4l-3.7 2.1.8-4.2L2 6.4l4.2-.5z" />
  </Icon>
);

const GridIcon = () => (
  <Icon width="14" height="14" viewBox="0 0 14 14" strokeWidth="1.1">
    <rect x="1.5" y="1.5" width="4.2" height="4.2" />
    <rect x="8.3" y="1.5" width="4.2" height="4.2" />
    <rect x="1.5" y="8.3" width="4.2" height="4.2" />
    <rect x="8.3" y="8.3" width="4.2" height="4.2" />
  </Icon>
);

const LibraryIcon = () => (
  <svg width="16" height="14" viewBox="0 0 16 14" fill="#3c3c3c">
    <rect x="0.5" y="1" width="2.2" height="12" />
    <rect x="4" y="1" width="2.2" height="12" />
    <rect x="7.5" y="1" width="1.2" height="12" />
    <path d="M10.2 1.2l1.1-.3 3.6 11.8-1.1.3z" />
  </svg>
);

const HamburgerIcon = () => (
  <Icon width="14" height="14" viewBox="0 0 14 14" strokeWidth="1.2">
    <path d="M2 3h10M2 7h10M2 11h10" />
  </Icon>
);

const side = { width: 18, height: 18, viewBox: '0 0 18 18', strokeWidth: 1 };

const StatsIcon = () => (
  <Icon {...side}>
    <path d="M2 1.5V15a1 1 0 0 0 1 1h14M5 6v7M8 9v4M11 3v10M14 6v7" />
  </Icon>
);

const LogsIcon = () => (
  <Icon {...side} strokeWidth={1.2}>
    <rect x="4" y="1.5" width="10" height="15" rx="0.8" />
    <path d="M7 2v7h4V2M4 13h10" />
  </Icon>
);

const RulesIcon = () => (
  <Icon {...side}>
    <circle cx="9" cy="9" r="5.5" />
    <path d="M5.8 12.5L12.2 5.5M1.5 3.5h2M14.5 3.5h2M1.5 14.5h2M14.5 14.5h2" strokeWidth={1.4} />
  </Icon>
);

const BotIcon = () => (
  <Icon {...side} strokeWidth={1.1}>
    <rect x="1.8" y="5.5" width="14.4" height="10.5" rx="1.6" />
    <path d="M9 1.5v4M5.5 8.5v1M12.5 8.5v1M5 12.5h8" />
  </Icon>
);

const ServerIcon = () => (
  <Icon {...side} strokeWidth={1.1}>
    <rect x="2" y="2" width="14" height="14" rx="0.8" />
    <path d="M2 6.6h14M2 11.3h14M7 2v14M4 4.3h1M4 9h1M4 13.6h1M9 4.3h5M9 9h5M9 13.6h5" />
  </Icon>
);

const HelpIcon = () => (
  <Icon {...side} strokeWidth={1.1}>
    <path d="M9 2a7 7 0 0 1 0 14c-1.2 0-2.4-.3-3.4-.9L2.4 16l.9-3.1A7 7 0 0 1 9 2z" />
    <path d="M7 7.2a2 2 0 1 1 3 1.8c-.7.4-1 .8-1 1.5M9 12.7v.1" />
  </Icon>
);

const GlobeAvatar = () => (
  <svg width="20" height="20" viewBox="0 0 20 20">
    <rect width="20" height="20" fill="#9fdcfa" />
    <g stroke="#fff" strokeWidth="1.1" fill="none">
      <ellipse cx="10" cy="10" rx="4.5" ry="9" />
      <path d="M10 0v20M0 10h20M1.5 5h17M1.5 15h17M5 2.5l10 15M15 2.5l-10 15" />
    </g>
  </svg>
);

const TableIcon = () => (
  <Icon width="16" height="14" viewBox="0 0 16 14" strokeWidth="1.1">
    <rect x="1.5" y="1" width="13" height="12" />
    <path d="M1.5 3.7h13M1.5 6.6h13M1.5 9.8h13M8 1v12" />
  </Icon>
);

const MapIcon = () => (
  <Icon width="16" height="14" viewBox="0 0 16 14" strokeWidth="0.9" style={{ color: '#666' }}>
    <path d="M1.5 3.2Q4 1.2 6 2.4v10Q4 11.2 1.5 13zM6 2.4q2 1.4 4 0v10q-2 1.4-4 0zM10 2.4q2.4-1.2 4.5.8V13q-2-2-4.5-.6z" />
  </Icon>
);

const ExportIcon = () => (
  <Icon width="16" height="16" viewBox="0 0 16 16" strokeWidth="1">
    <path d="M1.5 9.5v5h13v-5M8 11V1.5M5 4.5l3-3 3 3" />
  </Icon>
);

const ColumnsIcon = () => (
  <Icon width="16" height="14" viewBox="0 0 16 14" strokeWidth="0.9" style={{ color: '#555' }}>
    <rect x="1.5" y="1" width="13" height="12" rx="1.5" />
    <path d="M4.7 1v12M8 1v12M11.3 1v12" />
  </Icon>
);

const FunnelIcon = () => (
  <Icon width="16" height="16" viewBox="0 0 16 16" strokeWidth="0.9" style={{ color: '#555' }}>
    <path d="M1.5 2h13L9.6 8.3v6l-3.2-2V8.3z" />
  </Icon>
);

const MapboxMark = () => (
  <svg width="24" height="24" viewBox="0 0 24 24">
    <circle cx="12" cy="12" r="10.5" fill="#fff" stroke="#5b93ab" strokeWidth="1.4" />
    <path d="M7 17l1.3-5.5a4.3 4.3 0 1 1 4 5L7 17z" fill="#5b93ab" />
    <path d="M12.5 9.5v4M10.5 11.5h4" stroke="#fff" strokeWidth="1.4" />
  </svg>
);

const App = () => (
  <>
    <GlobalStyle />
    <Page>
      <Window>
        <TitleBar>
          <WinButton>{TitleGlyphs.close}</WinButton>
          <WinButton>{TitleGlyphs.min}</WinButton>
          <WinButton>{TitleGlyphs.max}</WinButton>
          <NavGroup>
            <NavIcon>{TitleGlyphs.back}</NavIcon>
            <NavIcon $faded>{TitleGlyphs.next}</NavIcon>
            <NavIcon><RotateCw size={16} strokeWidth={1.3} /></NavIcon>
            <NavIcon>{TitleGlyphs.newTab}</NavIcon>
          </NavGroup>
          <UrlBar>
            <LockIcon />
            <UrlText>
              https://<b>redirection.io</b>/manager/acme-agency/acme-project/detailed-logs?range=2024-08-05
            </UrlText>
            <StarIcon />
          </UrlBar>
          <ToolIcons>
            <ToolIcon><GridIcon /></ToolIcon>
            <ToolIcon><LibraryIcon /></ToolIcon>
            <ToolIcon><HamburgerIcon /></ToolIcon>
          </ToolIcons>
        </TitleBar>
        <Body>
          <Sidebar>
            <LogoBlock>
              <LogoDot><Shuffle size={14} strokeWidth={2} /></LogoDot>
            </LogoBlock>
            <OrgBlock>
              <OrgBadge>A</OrgBadge>
              <FolderButton><FolderMinus size={18} strokeWidth={1.2} /></FolderButton>
            </OrgBlock>
            <SideList>
              <SideItem><StatsIcon /></SideItem>
              <SideItem $active><LogsIcon /></SideItem>
              <SideItem><RulesIcon /></SideItem>
              <SideItem><BotIcon /></SideItem>
              <SideItem><ServerIcon /></SideItem>
              <SideItem><Settings size={17} strokeWidth={1} /></SideItem>
            </SideList>
            <SideList $bottom>
              <SideItem><Sparkles size={17} strokeWidth={1.2} /></SideItem>
              <SideItem><HelpIcon /></SideItem>
              <SideItem><Avatar><GlobeAvatar /></Avatar></SideItem>
              <SideItem><ChevronRight size={16} strokeWidth={2} color="#7d8084" /></SideItem>
            </SideList>
          </Sidebar>
          <Main>
            <TabStrip>
              <ViewsTab>
                <ChevronDown size={13} strokeWidth={2.5} color="#333" />
                See log views
              </ViewsTab>
            </TabStrip>
            <Content>
              <FilterRow>
                <SearchBox>
                  <Search size={16} strokeWidth={2} />
                  <SearchText>request url, request referrer or response location contains...</SearchText>
                  <ClearDot>×</ClearDot>
                </SearchBox>
                <Group>
                  <GroupButton $dim><ArrowLeft size={15} strokeWidth={1.3} /></GroupButton>
                  <GroupButton><RotateCw size={14} strokeWidth={2} /></GroupButton>
                  <GroupButton $dim><ArrowRight size={15} strokeWidth={1.3} /></GroupButton>
                </Group>
                <DateSelect>
                  Aug 5th, 18:24 - Aug 13th, 18:24
                  <ChevronDown size={16} strokeWidth={2.4} color="#222" />
                </DateSelect>
              </FilterRow>
              <ChartWrap>
                <Chart />
              </ChartWrap>
              <Panel>
                <PanelHead>
                  <Records>182{'\u202f'}265 records</Records>
                  <HeadGroup>
                    <GroupButton $w={30.5}><TableIcon /></GroupButton>
                    <GroupButton $w={30.5} $on><MapIcon /></GroupButton>
                  </HeadGroup>
                  <HeadGroup $gap={9}>
                    <GroupButton $w={30.75}><ExportIcon /></GroupButton>
                    <GroupButton $w={30.75}><Share2 size={14} strokeWidth={1.6} fill="#333" /></GroupButton>
                    <GroupButton $w={30.75}><ColumnsIcon /></GroupButton>
                    <GroupButton $w={30.75}><FunnelIcon /></GroupButton>
                  </HeadGroup>
                </PanelHead>
                <MapFrame>
                  <EuropeMap />
                  <MapLogo>
                    <MapboxMark />
                    <MapLogoText>mapbox</MapLogoText>
                  </MapLogo>
                  <Attribution>
                    © Mapbox © OpenStreetMap <b>Improve this map</b>
                  </Attribution>
                </MapFrame>
              </Panel>
            </Content>
          </Main>
        </Body>
      </Window>
    </Page>
  </>
);

export default App;
